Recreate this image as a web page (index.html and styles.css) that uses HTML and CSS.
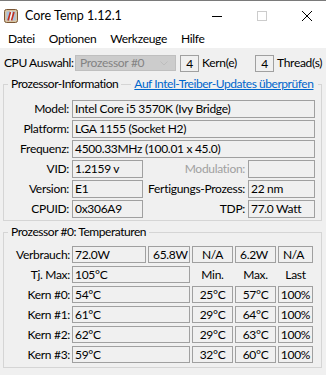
FILE: index.html
```html
<!DOCTYPE html>
<html lang="de">
<head>
  <meta charset="UTF-8">
  <meta name="viewport" content="width=device-width, initial-scale=1.0">
  <title>Core Temp 1.12.1</title>
  <link rel="stylesheet" href="styles.css">
</head>
<body>
  <div class="window">
    <div class="titlebar">
      <svg class="app-icon" viewBox="0 0 14 14">
        <rect x="0.5" y="0.5" width="13" height="13" rx="2" fill="#d8c4a0" stroke="#7a5634"/>
        <rect x="2.5" y="2.5" width="9" height="9" fill="#a9c1de"/>
        <rect x="6" y="2.5" width="2" height="9" fill="#f4f4f4"/>
        <path d="M4 11.5 L6.5 3 M7.5 11.5 L10 3" stroke="#c4301c" stroke-width="1.6" fill="none"/>
      </svg>
      <span class="title">Core Temp 1.12.1</span>
      <div class="caption-buttons">
        <span class="cap"><svg width="10" height="10" viewBox="0 0 10 10"><path d="M0 5.5 H10" stroke="#000" stroke-width="1"/></svg></span>
        <span class="cap"><svg width="10" height="10" viewBox="0 0 10 10"><rect x="0.5" y="0.5" width="9" height="9" fill="none" stroke="#cccccc"/></svg></span>
        <span class="cap"><svg width="10" height="10" viewBox="0 0 10 10"><path d="M0 0 L10 10 M10 0 L0 10" stroke="#000" stroke-width="1"/></svg></span>
      </div>
    </div>

    <div class="menubar">
      <span>Datei</span>
      <span>Optionen</span>
      <span>Werkzeuge</span>
      <span>Hilfe</span>
    </div>

    <div class="client">
      <div class="cpu-row">
        <span class="cpu-label">CPU Auswahl:</span>
        <div class="combo">
          <span>Prozessor #0</span>
          <svg width="8" height="5" viewBox="0 0 8 5"><path d="M0.5 0.5 L4 4 L7.5 0.5" stroke="#bdbdbd" fill="none"/></svg>
        </div>
        <span class="count">4</span>
        <span class="count-label">Kern(e)</span>
        <span class="count">4</span>
        <span class="count-label">Thread(s)</span>
      </div>

      <fieldset class="group info">
        <legend>
          <span>Prozessor-Information</span>
          <span class="rule"></span>
          <a href="#" class="link">Auf Intel-Treiber-Updates überprüfen</a>
        </legend>
        <div class="info-grid">
          <span class="lbl">Model:</span>
          <span class="val wide">Intel Core i5 3570K (Ivy Bridge)</span>

          <span class="lbl">Platform:</span>
          <span class="val wide">LGA 1155 (Socket H2)</span>

          <span class="lbl">Frequenz:</span>
          <span class="val wide">4500.33MHz (100.01 x 45.0)</span>

          <span class="lbl">VID:</span>
          <span class="val">1.2159 v</span>
          <span class="lbl dim">Modulation:</span>
          <span class="val"></span>

          <span class="lbl">Version:</span>
          <span class="val">E1</span>
          <span class="lbl">Fertigungs-Prozess:</span>
          <span class="val">22 nm</span>

          <span class="lbl">CPUID:</span>
          <span class="val">0x306A9</span>
          <span class="lbl">TDP:</span>
          <span class="val">77.0 Watt</span>
        </div>
      </fieldset>

      <fieldset class="group temps">
        <legend><span>Prozessor #0: Temperaturen</span></legend>
        <div class="temp-grid">
          <span class="lbl">Verbrauch:</span>
          <span class="val">72.0W</span>
          <span class="val pad">65.8W</span>
          <span class="val num">N/A</span>
          <span class="val pad">6.2W</span>
          <span class="val pad">N/A</span>

          <span class="lbl">Tj. Max:</span>
          <span class="val span2">105°C</span>
          <span class="head">Min.</span>
          <span class="head">Max.</span>
          <span class="head">Last</span>

          <span class="lbl">Kern #0:</span>
          <span class="val span2">54°C</span>
          <span class="val num">25°C</span>
          <span class="val num">57°C</span>
          <span class="val num">100%</span>

          <span class="lbl">Kern #1:</span>
          <span class="val span2">61°C</span>
          <span class="val num">29°C</span>
          <span class="val num">64°C</span>
          <span class="val num">100%</span>

          <span class="lbl">Kern #2:</span>
          <span class="val span2">62°C</span>
          <span class="val num">29°C</span>
          <span class="val num">63°C</span>
          <span class="val num">100%</span>

          <span class="lbl">Kern #3:</span>
          <span class="val span2">59°C</span>
          <span class="val num">32°C</span>
          <span class="val num">60°C</span>
          <span class="val num">100%</span>
        </div>
      </fieldset>
    </div>
  </div>
</body>
</html>
```

FILE: styles.css
```css
body {
  margin: 0;
  font-family: "Segoe UI", Lato, sans-serif;
  font-size: 12px;
  line-height: 16px;
  letter-spacing: -0.3px;
  color: #000;
  background-color: #f0f0f0;
  white-space: nowrap;
}
.window {
  width: 326px;
  height: 375px;
  overflow: hidden;
  border-top: 1px solid #7a7a7a;
  box-sizing: border-box;
  background-color: #f0f0f0;
}
.titlebar {
  display: flex;
  align-items: center;
  height: 29px;
  background-color: white;
  overflow: hidden;
}
.app-icon {
  width: 14px;
  height: 14px;
  margin: 0 7px 0 4px;
  flex-shrink: 0;
}
.title {
  flex: 1;
  font-size: 12.5px;
  letter-spacing: 0;
}
.caption-buttons {
  display: flex;
  margin-right: -3px;
}
.cap {
  width: 45px;
  height: 29px;
  display: flex;
  align-items: center;
  justify-content: center;
}
.menubar {
  display: flex;
  align-items: center;
  height: 18px;
  padding-left: 1px;
  background-color: white;
}
.menubar span {
  padding: 0 7px;
}
.client {
  padding-top: 7px;
}
.cpu-row {
  display: flex;
  align-items: center;
  height: 16px;
  padding-left: 4px;
}
.cpu-label {
  width: 71px;
  letter-spacing: -0.4px;
  flex-shrink: 0;
}
.combo {
  display: flex;
  align-items: center;
  justify-content: space-between;
  width: 101px;
  height: 16px;
  box-sizing: border-box;
  padding: 0 7px 0 4px;
  background-color: #cccccc;
  border: 1px solid #bfbfbf;
  color: #838383;
  flex-shrink: 0;
}
.count {
  width: 19px;
  height: 17px;
  box-sizing: border-box;
  margin-left: 4px;
  border: 1px solid #a0a0a0;
  text-align: center;
  line-height: 15px;
  flex-shrink: 0;
}
.count-label {
  width: 49px;
  padding-left: 3px;
  flex-shrink: 0;
}
.group {
  margin: 5px 4px 0 3px;
  padding: 8px 6px 2px 0;
  border: 1px solid #d5d5d5;
  min-width: 0;
}
.group legend {
  display: flex;
  align-items: center;
  margin-left: 4px;
  padding: 0 3px;
  line-height: 16px;
  letter-spacing: -0.45px;
}
.rule {
  width: 10px;
  height: 1px;
  margin: 0 3px;
  background-color: #d5d5d5;
}
.link {
  color: #0066cc;
  text-decoration: underline;
  padding-right: 2px;
}
.temps {
  margin-top: 3px;
  padding: 6px 8px 4px 0;
}
.info-grid {
  display: grid;
  grid-template-columns: 65px 71px 1fr 67px;
  grid-auto-rows: 18px;
  column-gap: 3px;
  row-gap: 2px;
}
.temp-grid {
  display: grid;
  grid-template-columns: 66px 74px 42px 41px 41px 1fr;
  grid-auto-rows: 17px;
  column-gap: 2px;
  row-gap: 3px;
}
.lbl {
  text-align: right;
  align-self: center;
}
.dim {
  color: #a0a0a0;
}
.val {
  border: 1px solid #a0a0a0;
  padding-left: 2px;
  overflow: hidden;
  display: flex;
  align-items: center;
}
.wide {
  grid-column: 2 / -1;
}
.span2 {
  grid-column: 2 / 4;
}
.pad {
  padding-left: 4px;
}
.num {
  justify-content: center;
  padding-left: 0;
}
.head {
  text-align: center;
  align-self: center;
}
```
